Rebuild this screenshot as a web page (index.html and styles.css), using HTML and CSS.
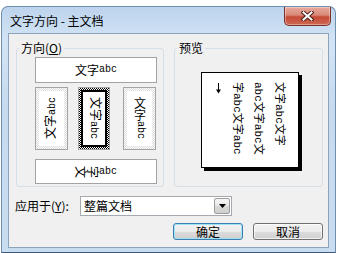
FILE: index.html
```html
<!DOCTYPE html>
<html lang="zh-CN">
<head>
<meta charset="utf-8">
<link rel="stylesheet" href="styles.css">
</head>
<body>
<div class="window">
  <div class="titlebar">
    <span class="title">文字方向 - 主文档</span>
    <div class="close">
      <svg width="13" height="10" viewBox="0 0 13 10"><path d="M2.5 1.5 L10.5 8.5 M10.5 1.5 L2.5 8.5" stroke="#4a2018" stroke-width="4" stroke-linecap="square" fill="none"/><path d="M2.5 1.5 L10.5 8.5 M10.5 1.5 L2.5 8.5" stroke="#fff" stroke-width="2" stroke-linecap="square" fill="none"/></svg>
    </div>
  </div>
  <div class="client">
    <div class="groups">
      <fieldset class="group group-dir">
        <legend>方向(<u>O</u>)</legend>
        <div class="dir">
          <div class="opt opt-wide opt-top"><span>文字</span><span class="lat">abc</span></div>
          <div class="dir-row">
            <div class="opt opt-tall ring-light"><div class="inner"><span class="vt side rot180">文字<span class="lat">abc</span></span></div></div>
            <div class="opt opt-tall ring-sel"><div class="inner sel"><span class="vt side">文字<span class="lat">abc</span></span></div></div>
            <div class="opt opt-tall ring-light"><div class="inner"><span class="vt mixed">文字<span class="lat">abc</span></span></div></div>
          </div>
          <div class="opt opt-wide opt-bottom"><span class="rc">文</span><span class="rc">字</span><span class="lat">abc</span></div>
        </div>
      </fieldset>
      <fieldset class="group group-prev">
        <legend>预览</legend>
        <div class="prev">
          <div class="page">
            <div class="col">文字<span class="lat">abc</span>文字</div>
            <div class="col"><span class="lat">abc</span>文字<span class="lat">abc</span>文</div>
            <div class="col">字<span class="lat">abc</span>文字<span class="lat">abc</span></div>
            <div class="arrow"><svg width="5" height="11" viewBox="0 0 5 11"><path d="M2.5 0 V9" stroke="#000" stroke-width="1"/><path d="M0 6.5 L5 6.5 L2.5 10.5 Z" fill="#000"/></svg></div>
          </div>
        </div>
      </fieldset>
    </div>
    <div class="apply-row">
      <span class="apply-label">应用于(<u>Y</u>):</span>
      <div class="combo">
        <span class="combo-text">整篇文档</span>
        <div class="combo-btn"><svg width="7" height="4" viewBox="0 0 7 4"><path d="M0 0 H7 L3.5 4 Z" fill="#000"/></svg></div>
      </div>
    </div>
    <div class="btn-row">
      <div class="btn btn-default">确定</div>
      <div class="btn">取消</div>
    </div>
  </div>
</div>
</body>
</html>
```
FILE: styles.css
```css
* { box-sizing: border-box; }
html, body { margin: 0; padding: 0; background: #fff; }
body {
  font-family: "Noto Sans CJK SC", "Noto Sans", sans-serif;
  font-size: 12px;
  color: #000;
  overflow: hidden;
}
.window {
  margin: 6px 0 0 1px;
  width: 335px;
  height: 247px;
  border: 1px solid #6f8eae;
  border-bottom-color: #3f5877;
  border-radius: 7px 7px 0 0;
  background: linear-gradient(180deg, #bdd4ed 0, #d3e4f5 14%, #c6dbf0 40%, #c9ddf1 100%);
  padding: 0 6px 4px;
  display: flex;
  flex-direction: column;
}
.titlebar {
  height: 26px;
  display: flex;
  justify-content: space-between;
  align-items: flex-start;
  flex: none;
}
.title {
  line-height: 12px;
  margin-top: 8px;
  padding-left: 2px;
}
.close {
  width: 47px;
  height: 19px;
  margin-right: -2px;
  border: 1px solid #7a3328;
  border-top: none;
  border-radius: 0 0 5px 5px;
  background: linear-gradient(180deg, #e8ab9d 0, #d98877 45%, #c54a35 55%, #cd6a55 100%);
  box-shadow: inset 0 0 0 1px rgba(255,255,255,0.35);
  display: flex;
  align-items: center;
  justify-content: center;
}
.close svg { display: block; }
.client {
  height: 215px;
  flex: none;
  border: 1px solid #8ea3ba;
  background: #f0f0f0;
  padding: 8px 5px 0 7px;
}
.groups { display: flex; gap: 10px; }
.group {
  margin: 0;
  padding: 0;
  border: 1px solid #d5dfe5;
  border-radius: 3px;
  height: 145px;
  min-width: 0;
}
.group-dir { width: 148px; flex: none; }
.group-prev { flex: 1; }
legend {
  padding: 0 2px;
  margin-left: 2px;
  font-size: 12px;
  line-height: 12px;
}
.dir { padding: 3px 0 0 18px; }
.lat {
  font-family: "Liberation Mono", "DejaVu Sans Mono", monospace;
  font-size: 10px;
}
.opt {
  border: 1px solid #a3a3a3;
  background: #fff;
  display: flex;
  align-items: center;
  justify-content: center;
}
.opt-wide { width: 122px; line-height: 12px; }
.opt-top { height: 26px; }
.opt-bottom { height: 25px; margin-top: 9px; }
.dir-row { display: flex; margin-top: 4px; height: 63px; }
.opt-tall { width: 33px; height: 63px; }
.dir-row .opt-tall:nth-child(2) { width: 32px; margin-left: 10px; }
.dir-row .opt-tall:nth-child(3) { margin-left: 13px; }
.ring-light {
  padding: 3px;
  background: conic-gradient(#dcdcdc 25%, #fff 0 50%, #dcdcdc 0 75%, #fff 0) 0 0 / 2px 2px;
}
.ring-sel {
  padding: 2px;
  background: conic-gradient(#000 25%, #fff 0 50%, #000 0 75%, #fff 0) 0 0 / 2px 2px;
}
.inner {
  width: 100%;
  height: 100%;
  background: #fff;
  display: flex;
  align-items: center;
  justify-content: center;
}
.inner.sel { border: 2px solid #000; }
.vt { writing-mode: vertical-rl; line-height: 12px; }
.side { text-orientation: sideways; }
.mixed { text-orientation: mixed; }
.rot180 { transform: rotate(180deg); }
.rc { display: inline-block; transform: rotate(90deg); }
.prev {
  height: 132px;
  display: flex;
  align-items: center;
  justify-content: center;
  padding-left: 3px;
}
.page {
  width: 98px;
  height: 96px;
  border: 1px solid #000;
  background: #fff;
  box-shadow: 3px 3px 0 #000;
  display: flex;
  flex-direction: row-reverse;
  gap: 8px;
  padding: 9px 12px 0 0;
}
.col {
  writing-mode: vertical-rl;
  text-orientation: sideways;
  font-size: 11px;
  line-height: 11px;
  white-space: nowrap;
}
.col .lat { font-size: 11px; }
.arrow { width: 5px; padding-top: 1px; margin-right: 2px; }
.arrow svg { display: block; }
.apply-row {
  display: flex;
  align-items: center;
  margin: 9px 0 0 -1px;
  height: 20px;
}
.apply-label { width: 65px; line-height: 12px; }
.combo {
  width: 152px;
  height: 20px;
  border: 1px solid #a5a9b0;
  background: #fff;
  display: flex;
  align-items: center;
  justify-content: space-between;
  padding: 0 1px 0 3px;
}
.combo-text { line-height: 12px; }
.combo-btn {
  width: 16px;
  height: 16px;
  border: 1px solid #9c9c9c;
  border-radius: 2px;
  background: linear-gradient(180deg, #f6f6f6 0, #e6e6e6 50%, #d8d8d8 51%, #cfcfcf 100%);
  display: flex;
  align-items: center;
  justify-content: center;
}
.combo-btn svg { display: block; }
.btn-row {
  display: flex;
  justify-content: flex-end;
  gap: 10px;
  margin-top: 7px;
}
.btn {
  width: 70px;
  height: 17px;
  border: 1px solid #707070;
  border-radius: 3px;
  background: linear-gradient(180deg, #f2f2f2 0, #ebebeb 50%, #dddddd 51%, #cfcfcf 100%);
  box-shadow: inset 0 0 0 1px rgba(255,255,255,0.75);
  display: flex;
  align-items: center;
  justify-content: center;
  line-height: 12px;
}
.btn-default {
  border-color: #3c7fb1;
  box-shadow: inset 0 0 0 1px #9fe2f8;
}
```
